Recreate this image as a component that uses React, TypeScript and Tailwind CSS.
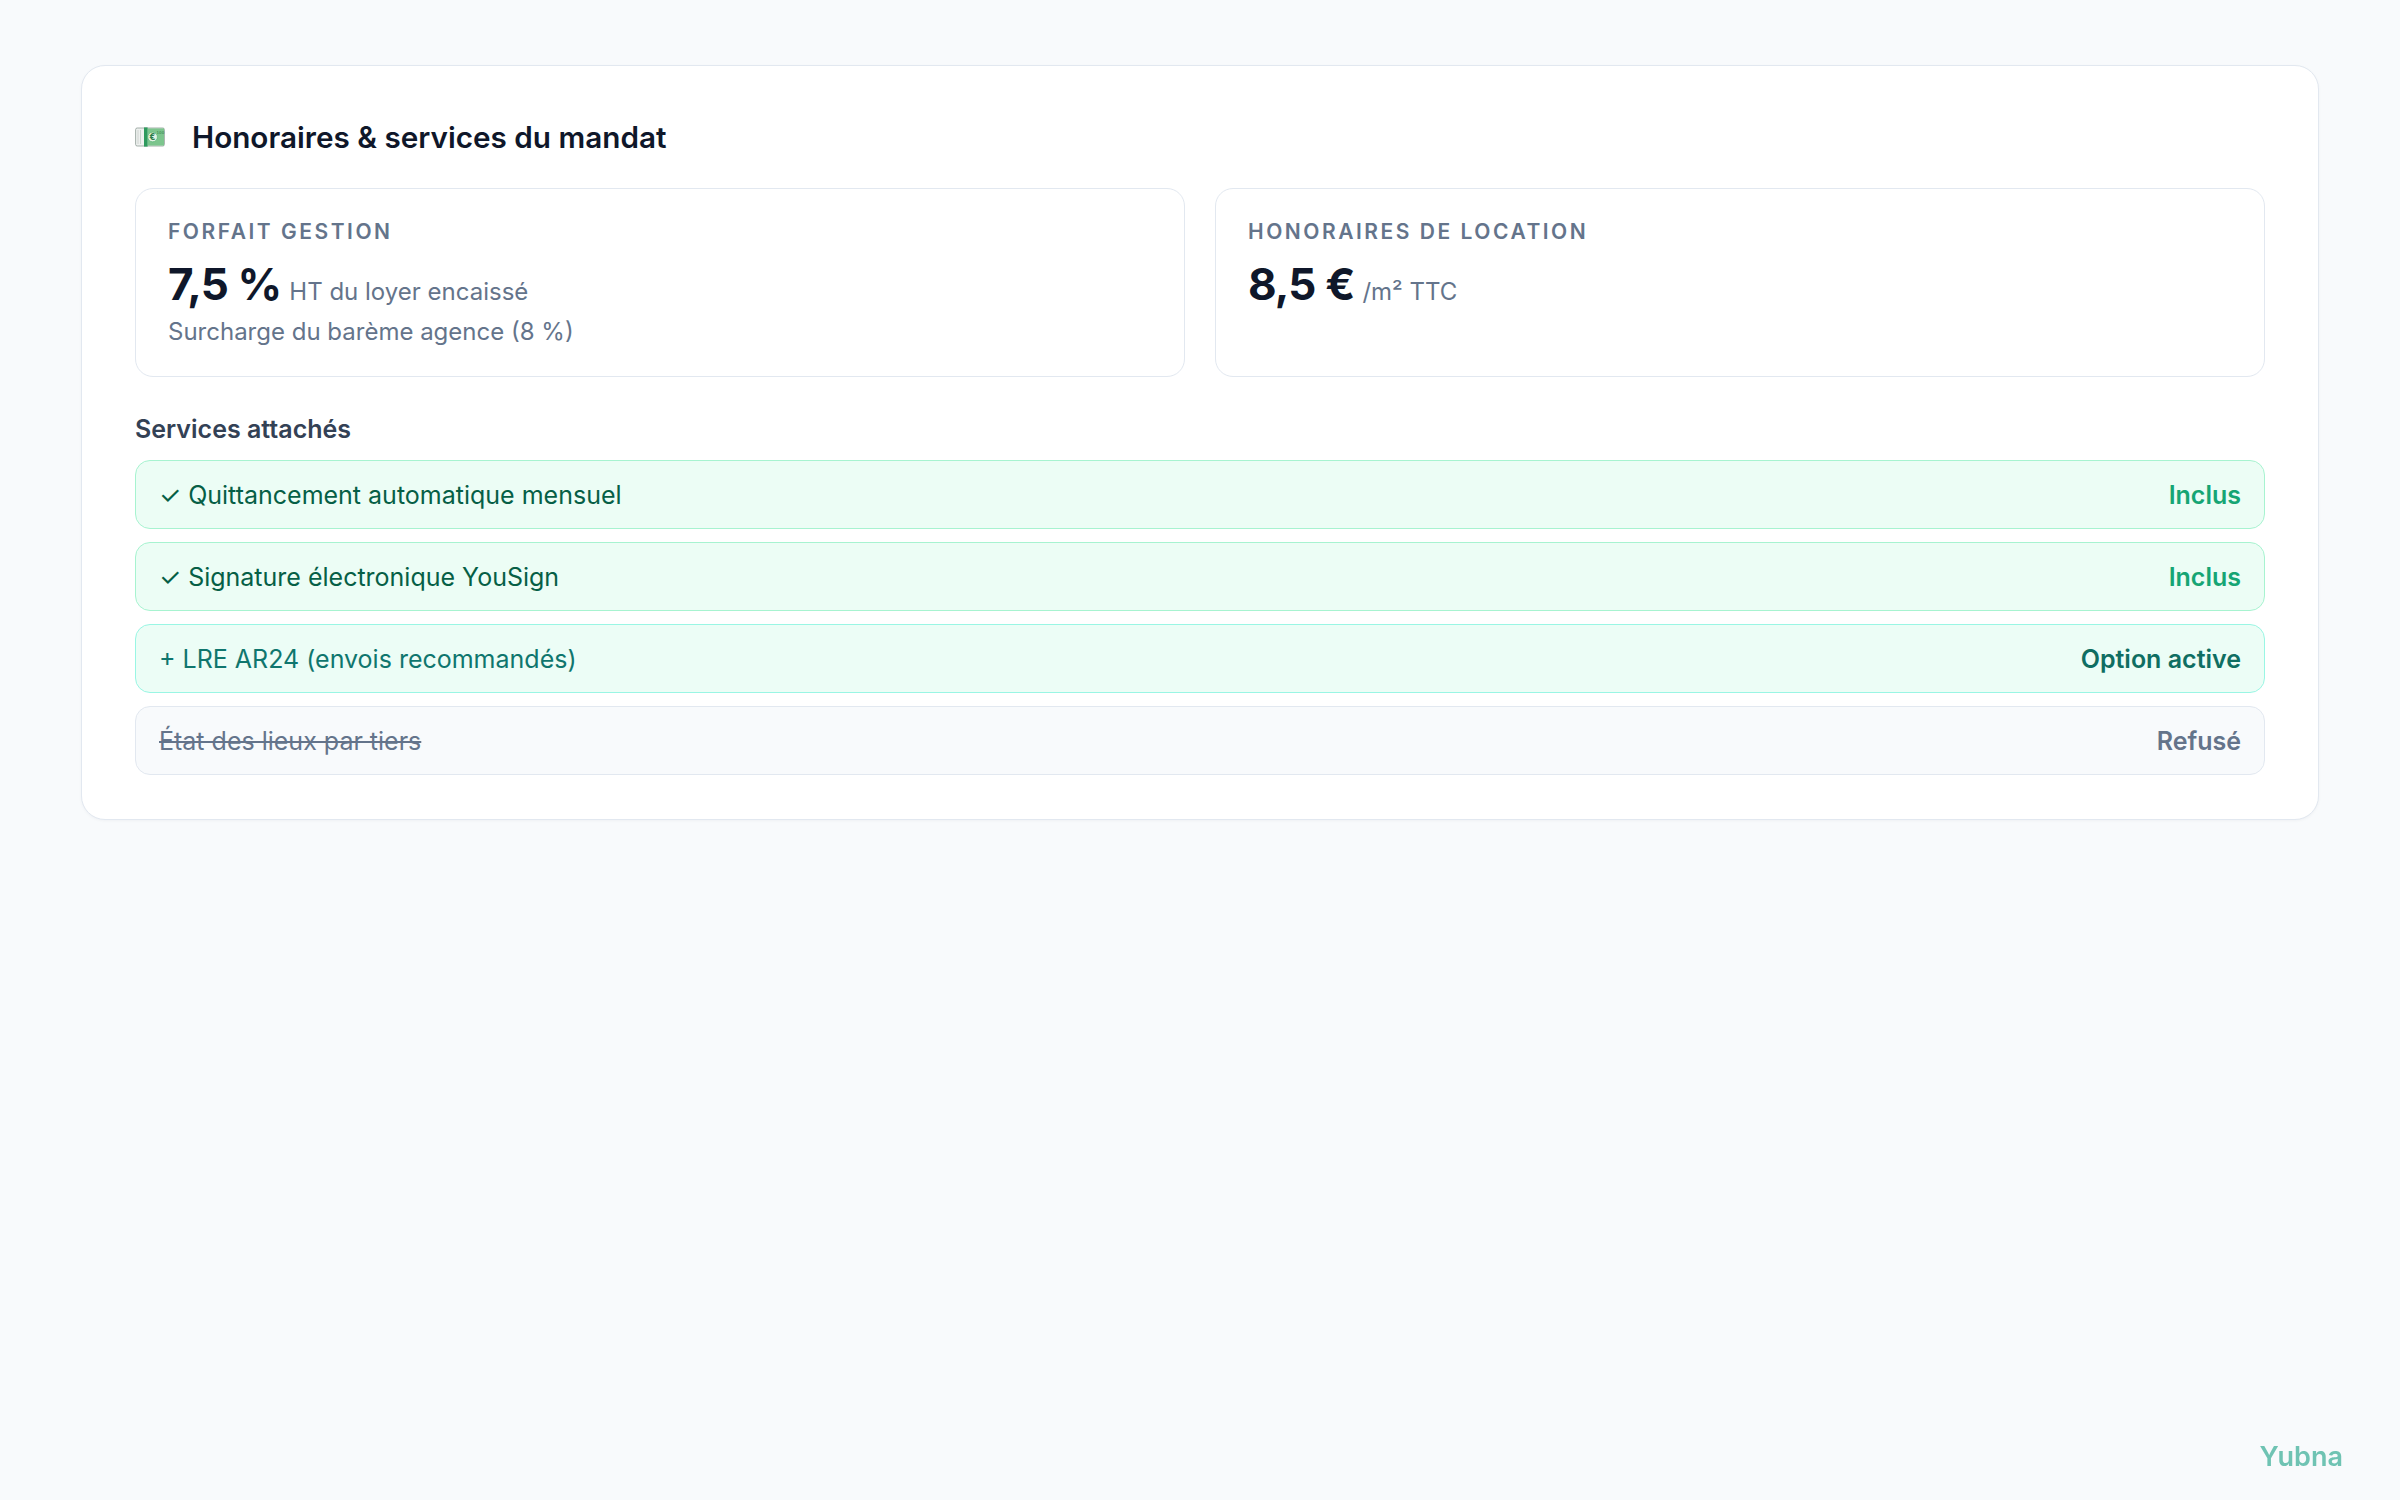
import React from "react";

function EuroNote() {
  return (
    <svg width="30" height="20" viewBox="0 0 30 20" aria-hidden="true">
      <rect x="0.6" y="1" width="28.8" height="18" rx="1.6" fill="#eef1ef" stroke="#9aa6a0" strokeWidth="0.9" />
      <line x1="3" y1="3" x2="3" y2="17" stroke="#c5ccc8" strokeWidth="0.8" />
      <line x1="5.5" y1="3" x2="5.5" y2="17" stroke="#c5ccc8" strokeWidth="0.8" />
      <rect x="12.5" y="1.4" width="16.5" height="17.2" fill="#7cc58d" />
      <rect x="9" y="0.4" width="3.6" height="19.2" fill="#2e9a5d" />
      <circle cx="17.6" cy="10" r="4.8" fill="#e4f3e5" stroke="#4caf6a" strokeWidth="0.6" />
      <text x="17.6" y="13" textAnchor="middle" fontSize="8" fontWeight="700" fill="#2e7d4a" fontFamily="DejaVu Sans, sans-serif">€</text>
      <text x="25.4" y="7" textAnchor="middle" fontSize="4" fill="#2e7d4a" fontFamily="DejaVu Sans, sans-serif">100</text>
    </svg>
  );
}

type Row = {
  label: string;
  status: string;
  kind: "included" | "option" | "refused";
};

const rows: Row[] = [
  { label: "✓ Quittancement automatique mensuel", status: "Inclus", kind: "included" },
  { label: "✓ Signature électronique YouSign", status: "Inclus", kind: "included" },
  { label: "+ LRE AR24 (envois recommandés)", status: "Option active", kind: "option" },
  { label: "État des lieux par tiers", status: "Refusé", kind: "refused" },
];

function ServiceRow({ row }: { row: Row }) {
  if (row.kind === "included") {
    return (
      <div className="flex items-center justify-between rounded-[15px] border border-[#a7f3d0] bg-[#ecfdf5] px-[23px] py-[15.5px] text-[25px] leading-[36px]">
        <span className="text-[#065f46]">{row.label}</span>
        <span className="font-semibold text-[#16a574]">{row.status}</span>
      </div>
    );
  }
  if (row.kind === "option") {
    return (
      <div className="flex items-center justify-between rounded-[15px] border border-[#99f6e4] bg-[#ecfdf6] px-[23px] py-[15.5px] text-[25px] leading-[36px]">
        <span className="text-[#0f766e]">{row.label}</span>
        <span className="font-semibold text-[#0f6e62]">{row.status}</span>
      </div>
    );
  }
  return (
    <div className="flex items-center justify-between rounded-[15px] border border-[#e2e8f0] bg-[#f8fafc] px-[23px] py-[15.5px] text-[25px] leading-[36px]">
      <span className="text-[#64748b] line-through">{row.label}</span>
      <span className="font-semibold text-[#64748b]">{row.status}</span>
    </div>
  );
}

export default function App() {
  return (
    <div className="min-h-screen bg-[#f8fafc] px-[81px] pt-[65px] font-[Inter,sans-serif] antialiased">
      <div className="rounded-[24px] border border-[#e2e8f0] bg-white px-[53px] pb-[44px] pt-[50px] shadow-[0_1px_3px_rgba(15,23,42,0.04)]">
        <div className="flex items-center gap-[27px]">
          <EuroNote />
          <h2 className="text-[29.7px] font-semibold leading-[42px] text-[#0f172a]">
            Honoraires &amp; services du mandat
          </h2>
        </div>

        <div className="mt-[30px] grid grid-cols-2 gap-[30px]">
          <div className="rounded-[18px] border border-[#e2e8f0] px-[32px] pb-[26px] pt-[28px]">
            <div className="text-[21px] font-semibold uppercase leading-[30px] tracking-[0.12em] text-[#64748b]">
              Forfait gestion
            </div>
            <div className="mt-[10px] flex items-baseline">
              <span className="text-[44px] font-bold leading-[54px] tracking-[-0.02em] text-[#0f172a]">7,5 %</span>
              <span className="ml-[8px] text-[24px] leading-[36px] text-[#64748b]">HT du loyer encaissé</span>
            </div>
            <div className="mt-[3px] text-[24px] leading-[36px] text-[#64748b]">
              Surcharge du barème agence (8 %)
            </div>
          </div>
          <div className="rounded-[18px] border border-[#e2e8f0] px-[32px] pb-[26px] pt-[28px]">
            <div className="text-[21px] font-semibold uppercase leading-[30px] tracking-[0.12em] text-[#64748b]">
              Honoraires de location
            </div>
            <div className="mt-[10px] flex items-baseline">
              <span className="text-[44px] font-bold leading-[54px] tracking-[-0.02em] text-[#0f172a]">8,5 €</span>
              <span className="ml-[8px] text-[24px] leading-[36px] text-[#64748b]">/m² TTC</span>
            </div>
          </div>
        </div>

        <div className="mt-[34px] text-[25px] font-semibold leading-[36px] text-[#334155]">
          Services attachés
        </div>
        <div className="mt-[13px] flex flex-col gap-[13px]">
          {rows.map((r) => (
            <ServiceRow key={r.label} row={r} />
          ))}
        </div>
      </div>

      <div className="fixed bottom-[22px] right-[57px] text-[27px] font-semibold leading-[42px] text-[#6fc3b3]">
        Yubna
      </div>
    </div>
  );
}
